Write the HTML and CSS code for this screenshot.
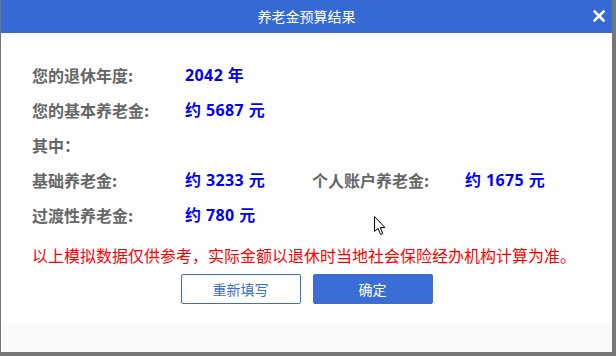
FILE: index.html
```html
<!DOCTYPE html>
<html lang="zh-CN">
<head>
    <meta charset="UTF-8">
    <title>养老金预算结果</title>
    <link rel="stylesheet" href="styles.css">
</head>
<body>
<div class="dialog">
    <div class="dialog-header">
        <span class="dialog-title">养老金预算结果</span>
        <span class="dialog-close">
            <svg width="12" height="12" viewBox="0 0 12 12">
                <path d="M1.5 1.5 L10.5 10.5 M10.5 1.5 L1.5 10.5" stroke="#FFFFFF" stroke-width="2.6" stroke-linecap="square" fill="none"/>
            </svg>
        </span>
    </div>
    <div class="dialog-body">
        <div class="result-row">
            <span class="label">您的退休年度:</span>
            <span class="value">2042 年</span>
        </div>
        <div class="result-row">
            <span class="label">您的基本养老金:</span>
            <span class="value">约 5687 元</span>
        </div>
        <div class="result-row">
            <span class="label">其中：</span>
        </div>
        <div class="result-row">
            <span class="label">基础养老金:</span>
            <span class="value">约 3233 元</span>
            <span class="label">个人账户养老金:</span>
            <span class="value">约 1675 元</span>
        </div>
        <div class="result-row">
            <span class="label">过渡性养老金:</span>
            <span class="value">约 780 元</span>
        </div>
        <p class="notice">以上模拟数据仅供参考，实际金额以退休时当地社会保险经办机构计算为准。</p>
        <div class="buttons">
            <button class="btn btn-outline">重新填写</button>
            <button class="btn btn-primary">确定</button>
        </div>
    </div>
    <div class="dialog-footer"></div>
    <!-- mouse pointer from the screenshot -->
    <svg class="cursor" width="13" height="20" viewBox="0 0 13 20">
        <path d="M0.5 0.5 L0.5 15.5 L4 12.3 L6.6 18.5 L8.8 17.6 L6.3 11.6 L11 11.6 Z" fill="#FFFFFF" stroke="#000000" stroke-width="1"/>
    </svg>
</div>
</body>
</html>
```

FILE: styles.css
```css
/* Dialog styles */
body {
    margin: 0;
    width: 616px;
    height: 356px;
    background: #777777;
    font-family: "Noto Sans CJK SC", "Microsoft YaHei", sans-serif;
    overflow: hidden;
}

.dialog {
    position: relative;
    margin-left: 1px;
    width: 611px;
    height: 352px;
    background: #FFFFFF;
    display: flex;
    flex-direction: column;
}

.dialog-header {
    position: relative;
    height: 33px;
    background: #356AD5;
    display: flex;
    justify-content: center;
    align-items: center;
}

.dialog-title {
    color: #FFFFFF;
    font-size: 14px;
    line-height: 33px;
}

.dialog-close {
    position: absolute;
    right: 7px;
    top: 10px;
    width: 12px;
    height: 12px;
    display: flex;
}

.dialog-body {
    flex: 1;
    padding: 25px 0 0 31px;
}

.result-row {
    display: flex;
    height: 35px;
    line-height: 35px;
    font-size: 16px;
    font-weight: bold;
}

.label {
    width: 153px;
    color: #666666;
}

.value {
    width: 127px;
    color: #0000FF;
    font-family: "Open Sans", "Noto Sans CJK SC", sans-serif;
    letter-spacing: 0.4px;
}

.notice {
    margin: 10px 0 0 0;
    font-size: 16px;
    line-height: 24px;
    color: #FF0000;
    white-space: nowrap;
}

.buttons {
    display: flex;
    justify-content: center;
    gap: 12px;
    margin-top: 7px;
    margin-left: -31px;
}

.btn {
    box-sizing: border-box;
    width: 120px;
    height: 30px;
    font-family: "Noto Sans CJK SC", "Microsoft YaHei", sans-serif;
    font-size: 14px;
    border: 1px solid #3A6ED6;
    border-radius: 2px;
    cursor: pointer;
}

.btn-outline {
    background: #FFFFFF;
    color: #3A6ED6;
}

.btn-primary {
    background: #3A6ED6;
    color: #FFFFFF;
}

.dialog-footer {
    height: 28px;
    background: #FAFAFA;
}

.cursor {
    position: absolute;
    left: 373px;
    top: 216px;
}
```
